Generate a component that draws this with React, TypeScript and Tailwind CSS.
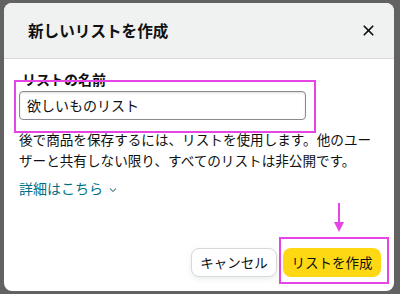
import { X } from 'lucide-react';

const font = { fontFamily: '"Noto Sans CJK JP", "Noto Sans", sans-serif' };

export default function App() {
  return (
    <div className="w-[400px] h-[294px] bg-[#626262] pt-[3px] pl-[4px] overflow-hidden" style={font}>
      <div className="relative w-[390px] h-[288px] bg-white rounded-[8px] overflow-hidden flex flex-col text-[#0f1111]">
        {/* header */}
        <div className="h-[56px] shrink-0 bg-[#f0f2f2] border-b border-[#d5d9d9] flex items-center justify-between pl-[24px] pr-[17px]">
          <h1 className="text-[15.6px] font-bold leading-none">新しいリストを作成</h1>
          <X className="w-[17px] h-[17px] text-[#0f1111]" strokeWidth={2.4} />
        </div>

        {/* body */}
        <div className="flex-1 flex flex-col pl-[15px] pr-[13px] pt-[10px] pb-[14px]">
          <label className="text-[14px] font-bold leading-[20px] pl-[3px]">リストの名前</label>
          <div className="mt-[2px] w-[287px] h-[29px] rounded-[4px] border border-[#888c8c] flex items-center px-[7px] text-[14px] shadow-[inset_0_1px_2px_rgba(15,17,17,0.15)]">
            欲しいものリスト
          </div>
          <p className="mt-[9px] text-[13.6px] leading-[21px] whitespace-nowrap">
            後で商品を保存するには、リストを使用します。他のユー
            <br />
            ザーと共有しない限り、すべてのリストは非公開です。
          </p>
          <div className="mt-[7px] flex items-center gap-[6px] text-[14px] leading-[20px] text-[#007185]">
            <span>詳細はこちら</span>
            <svg width="8" height="6" viewBox="0 0 8 6" fill="none" className="mt-[3px]">
              <path d="M1 1.5 L4 4.5 L7 1.5" stroke="#6f8c93" strokeWidth="1.1" />
            </svg>
          </div>

          <div className="flex-1" />
          <div className="flex justify-end gap-[6px]">
            <button className="w-[86px] h-[29px] rounded-[8px] bg-white border border-[#d5d9d9] shadow-[0_2px_5px_rgba(213,217,217,0.5)] text-[13.5px] text-[#0f1111]">
              キャンセル
            </button>
            <button className="w-[98px] h-[29px] rounded-[8px] bg-[#ffd814] text-[13.5px] text-[#0f1111]">
              リストを作成
            </button>
          </div>
        </div>

        {/* annotations */}
        <div className="absolute left-[10px] top-[77px] w-[302px] h-[53px] border-2 border-[#e645e6]" />
        <div className="absolute left-[275px] top-[234px] w-[110px] h-[47px] border-2 border-[#e645e6]" />
        <svg className="absolute left-[328px] top-[199px]" width="14" height="32" viewBox="0 0 14 32">
          <line x1="7" y1="1" x2="7" y2="24" stroke="#e645e6" strokeWidth="2" />
          <path d="M2 20 L7 30 L12 20 Z" fill="#e645e6" />
        </svg>
      </div>
    </div>
  );
}
